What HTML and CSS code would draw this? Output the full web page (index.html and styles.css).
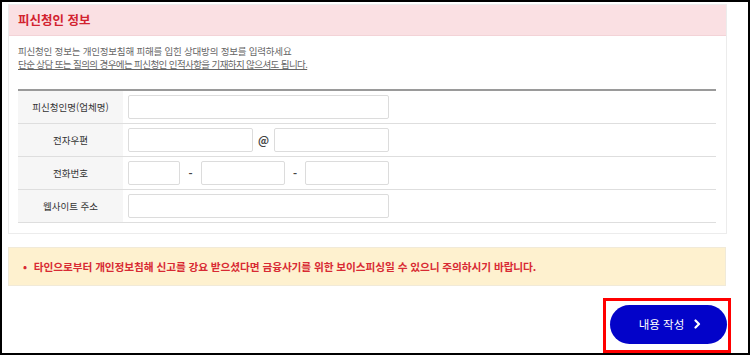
FILE: index.html
```html
<!DOCTYPE html>
<html lang="ko">
<head>
  <meta charset="UTF-8">
  <title>피신청인 정보</title>
  <link rel="stylesheet" href="styles.css">
</head>
<body>
  <div class="frame">
    <div class="card">
      <div class="card-head">피신청인 정보</div>
      <div class="card-body">
        <p class="desc">피신청인 정보는 개인정보침해 피해를 입힌 상대방의 정보를 입력하세요</p>
        <p class="desc under">단순 상담 또는 질의의 경우에는 피신청인 인적사항을 기재하지 않으셔도 됩니다.</p>

        <table class="form-table">
          <tr>
            <th>피신청인명(업체명)</th>
            <td><input type="text" class="w-full"></td>
          </tr>
          <tr>
            <th>전자우편</th>
            <td>
              <div class="inline">
                <input type="text" class="w-mail">
                <span class="sep at">@</span>
                <input type="text" class="w-mail2">
              </div>
            </td>
          </tr>
          <tr>
            <th>전화번호</th>
            <td>
              <div class="inline">
                <input type="text" class="w-tel1">
                <span class="sep dash">-</span>
                <input type="text" class="w-tel2">
                <span class="sep dash2">-</span>
                <input type="text" class="w-tel3">
              </div>
            </td>
          </tr>
          <tr>
            <th>웹사이트 주소</th>
            <td><input type="text" class="w-full"></td>
          </tr>
        </table>
      </div>
    </div>

    <div class="notice">
      <span class="dot">•</span>
      타인으로부터 개인정보침해 신고를 강요 받으셨다면 금융사기를 위한 보이스피싱일 수 있으니 주의하시기 바랍니다.
    </div>

    <div class="actions">
      <div class="mark">
        <button class="btn-write">내용 작성
          <svg width="9" height="10" viewBox="0 0 9 10"><path d="M2.5 1.5 L6 5 L2.5 8.5" fill="none" stroke="#fff" stroke-width="2.2" stroke-linecap="round" stroke-linejoin="round"/></svg>
        </button>
      </div>
    </div>
  </div>
</body>
</html>
```

FILE: styles.css
```css
* {
  box-sizing: border-box;
}
body {
  margin: 0;
  font-family: "Noto Sans CJK KR", "Noto Sans", sans-serif;
  background: #fff;
}
.frame {
  width: 750px;
  height: 355px;
  border: 2px solid #000;
  padding: 2px 0 0 6px;
  overflow: hidden;
}
.card {
  width: 719px;
  border: 1px solid #ececec;
}
.card-head {
  height: 31px;
  background: #fae0e3;
  border-bottom: 1px solid #f3d3d7;
  color: #d2232f;
  font-size: 12.5px;
  font-weight: bold;
  line-height: 30px;
  padding-left: 9px;
}
.card-body {
  padding: 9px 10px 10px 9px;
}
.desc {
  margin: 0;
  font-size: 9.5px;
  line-height: 13px;
  color: #666;
  letter-spacing: -0.2px;
}
.desc.under {
  text-decoration: underline;
  letter-spacing: -0.6px;
}
.form-table {
  width: 698px;
  margin-top: 18px;
  border-collapse: collapse;
  border-top: 2px solid #9a9a9a;
}
.form-table th,
.form-table td {
  height: 33px;
  border-bottom: 1px solid #dedede;
  padding: 0;
}
.form-table th {
  width: 105px;
  background: #f6f6f6;
  font-size: 9.5px;
  font-weight: normal;
  color: #333;
  text-align: center;
}
.form-table td {
  padding-left: 5px;
}
.inline {
  display: flex;
  align-items: center;
}
input {
  display: block;
  height: 24px;
  border: 1px solid #dcdcdc;
  border-radius: 2px;
  background: #fff;
}
.w-full { width: 261px; }
.w-mail { width: 125px; }
.w-mail2 { width: 115px; }
.w-tel1 { width: 52px; }
.w-tel2 { width: 84px; }
.w-tel3 { width: 84px; }
.sep {
  font-size: 11px;
  color: #444;
  font-weight: bold;
  text-align: center;
}
.at { width: 21px; }
.dash { width: 21px; }
.dash2 { width: 20px; }
.notice {
  width: 718px;
  height: 39px;
  margin-top: 13px;
  background: #fef1cf;
  border: 1px solid #f1ead8;
  color: #d82a33;
  font-size: 10.7px;
  font-weight: bold;
  line-height: 37px;
  padding-left: 14px;
  letter-spacing: -0.1px;
}
.dot {
  margin-right: 4px;
}
.actions {
  display: flex;
  justify-content: flex-end;
  padding-right: 17px;
  margin-top: 12px;
}
.mark {
  width: 128px;
  height: 55px;
  border: 3px solid #f00;
  padding: 4px 0 0 4px;
}
.btn-write {
  width: 117px;
  height: 39px;
  border: none;
  border-radius: 20px;
  background: #0303c9;
  color: #fff;
  font-family: inherit;
  font-size: 11.5px;
  display: flex;
  align-items: center;
  justify-content: center;
  gap: 9px;
  padding: 0 0 0 4px;
}
```
